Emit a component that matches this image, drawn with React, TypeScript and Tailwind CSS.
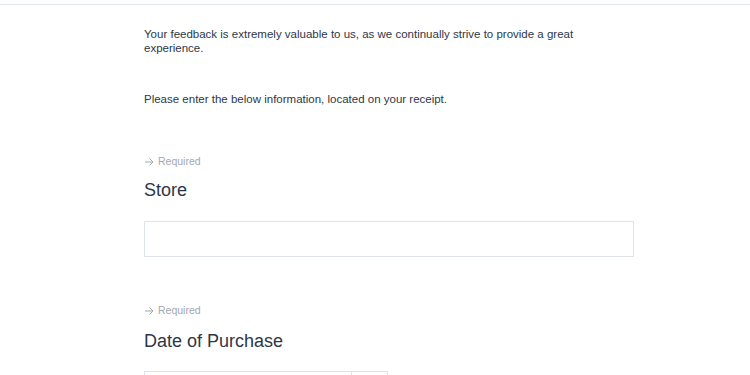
export default function App() {
    return (
        <div className="h-[375px] w-full overflow-hidden bg-white font-['Liberation_Sans',Arial,sans-serif] text-[#2d3748]">
            <div className="h-[5px] border-b border-[#e2e8f0]" />

            <div className="ml-[144px] w-[490px]">
                <p className="mt-[22px] text-[11.5px] leading-[14px]">
                    Your feedback is extremely valuable to us, as we continually strive to provide a great
                    experience.
                </p>

                <p className="mt-[37px] text-[11.5px] leading-[14px]">
                    Please enter the below information, located on your receipt.
                </p>

                <div className="mt-[49px]">
                    <p className="flex items-center gap-[4px] text-[10.5px] leading-[13px] text-[#a3a7ae]">
                        <svg className="h-[10px] w-[10px]" viewBox="0 0 10 10" fill="none" stroke="currentColor" strokeWidth="1">
                            <path d="M1 5h8M5.5 1.5 9 5 5.5 8.5" />
                        </svg>
                        Required
                    </p>
                    <h2 className="mt-[11px] text-[18px] leading-[22px] text-[#2d3748]">Store</h2>
                    <input
                        className="mt-[20px] block h-[36px] w-[490px] border border-[#dfe3ec] bg-white px-2 text-[13px] outline-none"
                        type="text"
                    />
                </div>

                <div className="mt-[47px]">
                    <p className="flex items-center gap-[4px] text-[10.5px] leading-[13px] text-[#a3a7ae]">
                        <svg className="h-[10px] w-[10px]" viewBox="0 0 10 10" fill="none" stroke="currentColor" strokeWidth="1">
                            <path d="M1 5h8M5.5 1.5 9 5 5.5 8.5" />
                        </svg>
                        Required
                    </p>
                    <h2 className="mt-[13px] text-[18px] leading-[22px] text-[#2d3748]">Date of Purchase</h2>
                    <div className="mt-[19px] flex h-[36px] w-[244px] border border-[#dfe3ec]">
                        <input className="h-full w-[206px] bg-white px-2 text-[13px] outline-none" type="text" />
                        <div className="h-full flex-1 border-l border-[#dfe3ec]" />
                    </div>
                </div>
            </div>
        </div>
    );
}
